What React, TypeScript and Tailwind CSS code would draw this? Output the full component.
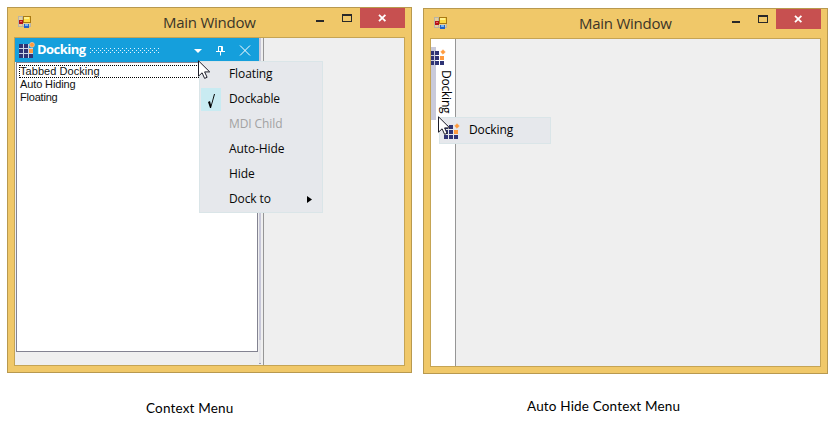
import type { ReactNode } from 'react';

function AppIcon() {
  return (
    <svg width="14" height="14" viewBox="0 0 14 14" shapeRendering="crispEdges">
      <path d="M.5 1.5h12v10H.5zM4.5 1v10M0 7.5h12" fill="#e5cf9c" stroke="#b9b4a5" />
      <rect x="1" y="5" width="4" height="4" fill="#b5121b" />
      <rect x="2" y="6" width="2" height="1" fill="#ee6a62" />
      <rect x="5" y="1" width="8" height="7" fill="#a97912" />
      <rect x="6" y="2" width="6" height="5" fill="#ffdb45" />
      <rect x="6" y="2" width="5" height="2" fill="#fff08c" />
      <rect x="6" y="9" width="5" height="4" fill="#2563c4" />
      <rect x="7" y="9" width="3" height="2" fill="#76b6f4" />
    </svg>
  );
}

function GridIcon({ light = false }: { light?: boolean }) {
  return (
    <svg width="16" height="16" viewBox="0 0 16 16">
      {light && <path d="M0 2h10v4h4v10H0z" fill="#c9d6e6" />}
      {[2, 7, 12].map((y, row) =>
        [0, 5, 10].map((x, col) =>
          row === 0 && col === 2 ? null : (
            <rect key={`${x}-${y}`} x={x} y={y} width="4" height="4" fill={row === 1 && col === 2 ? '#ff9a3d' : '#2f3475'} />
          ),
        ),
      )}
      {light
        ? <circle cx="13" cy="2.8" r="2.4" fill="#ff9a3d" stroke="#f6c797" strokeWidth=".8" />
        : <path d="M13 .7 15.3 3 13 5.3 10.7 3z" fill="#ff9a3d" stroke="#ff9a3d" strokeWidth=".5" />}
    </svg>
  );
}

function Cursor({ className }: { className: string }) {
  return (
    <svg className={className} width="13" height="20" viewBox="0 0 13 20">
      <path d="M.5.8v15.4l3.6-3.4 2.5 5.6 2.5-1.1-2.5-5.4h5.1z" fill="#fff" stroke="#1c1c28" strokeWidth="1" />
    </svg>
  );
}

function WindowFrame({ children }: { children: ReactNode }) {
  return (
    <section className="flex h-[366px] w-[405px] flex-col border border-[#b8994f] bg-[#f0c869] px-1.5 pb-1.5">
      <header className="flex h-[29px] shrink-0 items-start">
        <div className="w-[149px] pt-[7px] pl-1"><AppIcon /></div>
        <h1 className="w-[146px] pt-1 text-[15px] leading-[20px] tracking-[-0.25px] whitespace-nowrap text-[#3b3528]">Main Window</h1>
        <svg width="51" height="20" viewBox="0 0 51 20" shapeRendering="crispEdges">
          <rect x="7" y="12" width="8" height="2" fill="#292929" />
          <path d="M33 6h10v8H33zM34 8v5h8V8z" fill="#292929" fillRule="evenodd" />
        </svg>
        <div className="flex h-5 w-[45px] shrink-0 items-center justify-center bg-[#c75050]">
          <svg width="9" height="8" viewBox="0 0 9 8"><path d="m1 .8 6.4 6.4M7.4.8 1 7.2" stroke="#fff" strokeWidth="1.8" /></svg>
        </div>
      </header>
      <div className="relative flex h-[329px] overflow-hidden border border-[#c5a454] bg-[#efefef]">{children}</div>
    </section>
  );
}

const entries = ['Floating', 'Dockable', 'MDI Child', 'Auto-Hide', 'Hide', 'Dock to'];

function ContextMenu() {
  return (
    <ul className="absolute top-[23px] left-[184px] z-10 w-[124px] border border-[#dae5e8] bg-[#e6e8ec] text-[12px] tracking-[-0.1px] text-[#080808]">
      {entries.map((label) => (
        <li key={label} className="flex h-[25px] items-center pl-px">
          <span className={label === 'Dockable' ? 'flex h-[23px] w-5 items-center justify-center bg-[#c9ebf2]' : 'w-5'}>
            {label === 'Dockable' && (
              <svg className="mt-1 ml-px" width="8" height="15" viewBox="0 0 8 15"><path d="M0 8 2 7l1 4L6 0l1 0-4 14H2z" fill="#000" /></svg>
            )}
          </span>
          <span className={label === 'MDI Child' ? 'mb-px ml-2 text-[#a2a2a2]' : 'mb-px ml-2'}>{label}</span>
          {label === 'Dock to' && <svg className="mr-[10px] ml-auto" width="5" height="7" viewBox="0 0 5 7"><path d="m0 0 5 3.5L0 7z" /></svg>}
        </li>
      ))}
    </ul>
  );
}

function DockingPanel() {
  return (
    <div className="flex w-[244px] flex-col">
      <div className="flex h-6 items-center bg-[#159fdc] pl-1 text-white">
        <GridIcon light />
        <span className="mb-px ml-[2px] w-[53px] text-[13px] leading-none font-bold tracking-[-0.55px]">Docking</span>
        <svg width="70" height="5" viewBox="0 0 70 5" shapeRendering="crispEdges">
          <defs>
            <pattern id="grip" width="4" height="4" patternUnits="userSpaceOnUse">
              <path d="M0 0h1v1H0zM2 2h1v1H2z" fill="#e4f4fc" />
            </pattern>
          </defs>
          <rect width="70" height="5" fill="url(#grip)" />
        </svg>
        <svg className="ml-auto mr-[3px]" width="66" height="14" viewBox="0 0 66 14" fill="none" stroke="#fff">
          <path d="M4 6h8l-4 4z" fill="#fff" stroke="none" />
          <path d="M26 8.5h9M28.5 8V3.5h4V8M31.5 3v5M30.5 8.5v4" />
          <path d="m50 2.5 10 10m0-10-10 10" strokeWidth="1" />
        </svg>
      </div>
      <ul className="ml-px h-[290px] w-[242px] border border-[#838391] bg-white pt-[2px] pl-[2px] font-['Liberation_Sans',sans-serif] text-[11px] leading-[13px] text-[#111]">
        <li className="border border-r-0 border-dotted border-black leading-[11px] tracking-[0.05px]">Tabbed Docking</li>
        <li className="pl-px tracking-[-0.12px]">Auto Hiding</li>
        <li className="pl-px tracking-[-0.2px]">Floating</li>
      </ul>
    </div>
  );
}

export default function App() {
  return (
    <main className="h-[423px] w-[833px] overflow-hidden bg-white font-['Open_Sans',sans-serif]">
      <div className="flex gap-[11px] pt-[7px] pl-[7px]">
        <WindowFrame>
          <DockingPanel />
          <div className="flex h-full w-[5px] flex-col border-r border-[#969696]">
            <div className="h-[302px] w-[2px] bg-[#c8c8d9]" />
            <div className="h-[23px] w-[2px] bg-[#e4e4e9]" />
            <div className="h-px w-[2px] bg-[#9a9aae]" />
          </div>
          <ContextMenu />
          <Cursor className="absolute top-[22px] left-[183px] z-20" />
        </WindowFrame>
        <div className="pt-px">
          <WindowFrame>
            <div className="flex w-[25px] border-r border-[#969696] bg-white pt-2">
              <div className="h-[73px] w-[5px] bg-[#c9cada]" />
              <div className="-ml-[5px] h-[73px] w-6">
                <div className="-ml-px pt-[2px]"><GridIcon /></div>
                <span className="ml-[6px] block pt-[5px] text-[12px] leading-[18px] tracking-[-0.22px] [writing-mode:vertical-rl]">Docking</span>
              </div>
            </div>
            <div className="absolute top-[78px] left-2 flex h-[27px] w-[112px] items-center border border-[#dae5e8] bg-[#e6e8ec] pl-1 text-[12px] tracking-[-0.1px]">
              <GridIcon /><span className="mb-px ml-[9px]">Docking</span>
            </div>
            <Cursor className="absolute top-[77px] left-[7px] z-20" />
          </WindowFrame>
        </div>
      </div>
      <div className="flex font-['Lato',sans-serif] text-[13.5px] leading-4 tracking-[0.17px] text-black">
        <p className="mt-[26px] ml-[146px] w-[381px]">Context Menu</p>
        <p className="mt-6">Auto Hide Context Menu</p>
      </div>
    </main>
  );
}
